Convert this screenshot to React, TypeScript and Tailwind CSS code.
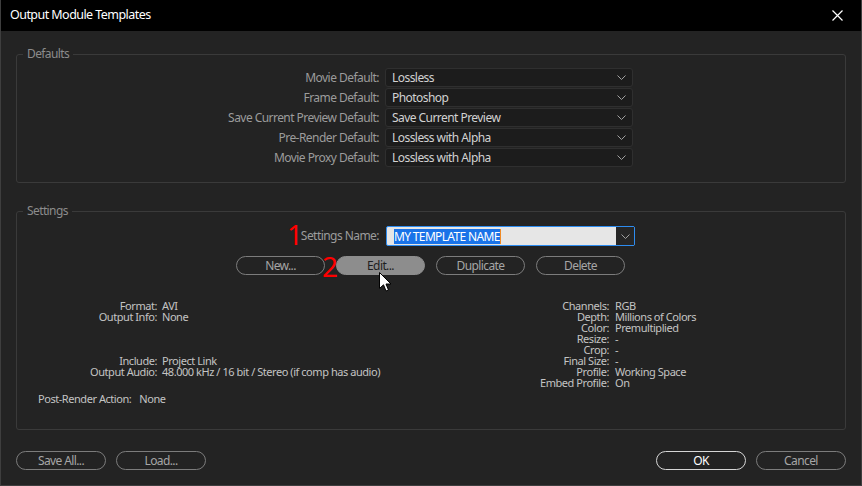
import React from "react"

const defaults = [
  ["Movie Default:", "Lossless"],
  ["Frame Default:", "Photoshop"],
  ["Save Current Preview Default:", "Save Current Preview"],
  ["Pre-Render Default:", "Lossless with Alpha"],
  ["Movie Proxy Default:", "Lossless with Alpha"],
]

const leftInfo = [
  ["Format:", "AVI"],
  ["Output Info:", "None"],
  ["", ""],
  ["", ""],
  ["", ""],
  ["Include:", "Project Link"],
  ["Output Audio:", "48.000 kHz / 16 bit / Stereo (if comp has audio)"],
]

const rightInfo = [
  ["Channels:", "RGB"],
  ["Depth:", "Millions of Colors"],
  ["Color:", "Premultiplied"],
  ["Resize:", "-"],
  ["Crop:", "-"],
  ["Final Size:", "-"],
  ["Profile:", "Working Space"],
  ["Embed Profile:", "On"],
]

const Chevron = () => (
  <svg width="9" height="5" viewBox="0 0 9 5" className="text-[#a0a0a0]">
    <path d="M0.5 0.5 L4.5 4.5 L8.5 0.5" fill="none" stroke="currentColor" strokeWidth="1" />
  </svg>
)

const Dropdown = ({ value }: { value: string }) => (
  <div className="flex h-[19px] w-[248px] items-center justify-between rounded-[3px] border border-[#2f2f2f] bg-[#1c1c1c] pl-[6px] pr-[6px] text-[12px] leading-[16px] tracking-[-0.55px] text-[#d2d2d2]">
    <span>{value}</span>
    <Chevron />
  </div>
)

const PillButton = ({ label, variant = "normal", className = "" }: { label: string; variant?: "normal" | "active" | "primary"; className?: string }) => {
  const styles = {
    normal: "border border-[#7c7c7c] text-[#a6a6a6]",
    active: "border border-[#8d8d8d] bg-[#8d8d8d] text-[#1e1e1e]",
    primary: "border-[1.5px] border-[#d6d6d6] text-white",
  }[variant]
  return (
    <div className={`flex h-[19px] w-[89px] items-center justify-center rounded-full text-[12px] leading-[16px] tracking-[-0.6px] ${styles} ${className}`}>
      {label}
    </div>
  )
}

const InfoBlock = ({ rows, labelWidth, gap, className = "" }: { rows: string[][]; labelWidth: string; gap: string; className?: string }) => (
  <div className={`flex flex-col ${className}`}>
    {rows.map(([k, v], i) => (
      <div key={i} className={`flex h-[11px] items-center leading-[11px] ${gap}`}>
        <span className={`${labelWidth} shrink-0 text-right`}>{k}</span>
        <span>{v}</span>
      </div>
    ))}
  </div>
)

export default function App() {
  return (
    <div className="relative flex h-[486px] w-[862px] flex-col border-x border-b border-[#3e3e3e] bg-[#232323] font-['Noto_Sans',sans-serif]">
      {/* title bar */}
      <div className="flex h-[31px] shrink-0 items-center justify-between bg-black pl-[9px] pr-[18px] text-[12.5px] tracking-[-0.55px] text-white">
        <span>Output Module Templates</span>
        <svg width="11" height="11" viewBox="0 0 11 11">
          <path d="M0.5 0.5 L10.5 10.5 M10.5 0.5 L0.5 10.5" stroke="white" strokeWidth="1.2" />
        </svg>
      </div>

      <div className="flex flex-1 flex-col px-[15px]">
        {/* Defaults */}
        <fieldset className="mt-[15px] h-[137px] rounded-[3px] border border-[#3a3a3a] p-0">
          <legend className="ml-[6px] px-[4px] text-[12px] leading-[16px] tracking-[-0.6px] text-[#8c8c8c]">Defaults</legend>
          <div className="mt-[6px] flex flex-col gap-[1px]">
            {defaults.map(([label, value]) => (
              <div key={label} className="flex items-center gap-[6px]">
                <span className="w-[362px] text-right text-[12px] leading-[16px] tracking-[-0.55px] text-[#9c9c9c]">{label}</span>
                <Dropdown value={value} />
              </div>
            ))}
          </div>
        </fieldset>

        {/* Settings */}
        <fieldset className="mt-[20px] h-[227px] rounded-[3px] border border-[#3a3a3a] p-0">
          <legend className="ml-[6px] px-[4px] text-[12px] leading-[16px] tracking-[-0.6px] text-[#8c8c8c]">Settings</legend>
          <div className="mt-[7px] flex items-center gap-[7px]">
            <span className="w-[362px] text-right text-[12px] leading-[16px] tracking-[-0.55px] text-[#9c9c9c]">Settings Name:</span>
            <div className="flex h-[20px] w-[249px] items-stretch rounded-[2px] border border-[#2d8cf0] bg-[#e6e6e6]">
              <div className="flex flex-1 items-center pl-[7px]">
                <span className="bg-[#1a73e8] text-[12px] leading-[15px] tracking-[-0.65px] text-white">MY TEMPLATE NAME</span>
                <span className="h-[15px] w-[1px] bg-[#f08a24]" />
              </div>
              <div className="flex w-[18px] items-center justify-center bg-[#262626]">
                <Chevron />
              </div>
            </div>
          </div>

          <div className="mt-[10px] flex gap-[11px] pl-[219px]">
            <PillButton label="New..." />
            <PillButton label="Edit..." variant="active" />
            <PillButton label="Duplicate" />
            <PillButton label="Delete" />
          </div>

          <div className="mt-[25px] flex text-[11px] tracking-[-0.45px] text-[#c4c4c4]">
            <InfoBlock rows={leftInfo} labelWidth="w-[140px]" gap="gap-[5px]" className="w-[464px]" />
            <InfoBlock rows={rightInfo} labelWidth="w-[128px]" gap="gap-[6px]" />
          </div>
          <div className="mt-[5px] flex h-[11px] items-center text-[11px] leading-[11px] tracking-[-0.45px] text-[#c4c4c4]">
            <span className="pl-[21px]">Post-Render Action:</span>
            <span className="ml-[8px]">None</span>
          </div>
        </fieldset>

        {/* footer */}
        <div className="mt-[21px] flex items-center">
          <PillButton label="Save All..." className="w-[90px]" />
          <PillButton label="Load..." className="ml-[10px] w-[90px]" />
          <PillButton label="OK" variant="primary" className="ml-auto w-[90px]" />
          <PillButton label="Cancel" className="ml-[10px] w-[90px]" />
        </div>
      </div>

      {/* annotations */}
      <span className="absolute left-[286px] top-[218px] text-[28px] leading-[32px] text-[#ff0000]">1</span>
      <span className="absolute left-[321px] top-[250px] text-[28px] leading-[32px] text-[#ff0000]">2</span>

      {/* mouse pointer */}
      <svg className="absolute left-[378px] top-[272px]" width="13" height="21" viewBox="0 0 13 21">
        <path d="M0.5 0.5 L0.5 16.5 L4.5 12.8 L7 19 L9.5 18 L7 12 L12 12 Z" fill="white" stroke="black" strokeWidth="1" strokeLinejoin="round" />
      </svg>
    </div>
  )
}
